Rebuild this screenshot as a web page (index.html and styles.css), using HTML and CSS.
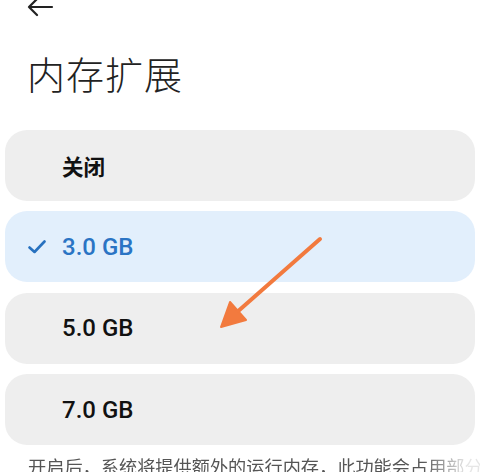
FILE: index.html
```html
<!DOCTYPE html>
<html>
<head lang="zh">
  <meta charset="UTF-8">
  <title>内存扩展</title>
  <link rel="stylesheet" href="styles.css">
</head>
<body>
<div class="page">
  <div class="top-bar">
    <svg class="back-icon" width="28" height="20" viewBox="0 0 28 20">
      <path d="M26 10 H3 M11 2 L3 10 L11 18" fill="none" stroke="#222" stroke-width="2.2" stroke-linecap="round" stroke-linejoin="round"/>
    </svg>
  </div>
  <h1 class="page-title">内存扩展</h1>

  <div class="option-list">
    <div class="option-item">
      <span class="check-slot"></span>
      <span class="option-text cn">关闭</span>
    </div>
    <div class="option-item selected">
      <span class="check-slot">
        <svg width="18" height="14" viewBox="0 0 18 14">
          <path d="M1.5 7.5 L6.5 12 L16.5 1.5" fill="none" stroke="#2771bf" stroke-width="2.6" stroke-linecap="round" stroke-linejoin="round"/>
        </svg>
      </span>
      <span class="option-text">3.0 GB</span>
    </div>
    <div class="option-item">
      <span class="check-slot"></span>
      <span class="option-text">5.0 GB</span>
    </div>
    <div class="option-item">
      <span class="check-slot"></span>
      <span class="option-text">7.0 GB</span>
    </div>
  </div>

  <p class="tip-text">开启后，系统将提供额外的运行内存，此功能会占用部分</p>

  <!-- 标注箭头 -->
  <svg class="mark-arrow" width="480" height="472" viewBox="0 0 480 472">
    <path d="M320 239 L236 313" fill="none" stroke="#f27a3e" stroke-width="4" stroke-linecap="round"/>
    <path d="M221 327 L230 302 L246 320 Z" fill="#f27a3e" stroke="#f27a3e" stroke-width="2" stroke-linejoin="round"/>
  </svg>
</div>
</body>
</html>
```

FILE: styles.css
```css
html, body, div, p, h1, span {
  margin: 0px;
  padding: 0px;
}

body {
  background: #ffffff;
  font-family: Roboto, "Noto Sans CJK SC", sans-serif;
  color: #1a1a1a;
  overflow: hidden;
}

.page {
  width: 480px;
  height: 472px;
  position: relative;
  overflow: hidden;
}

.top-bar {
  height: 20px;
  padding-left: 26px;
}

.back-icon {
  display: block;
  margin-top: -3px;
}

.page-title {
  margin-top: 30px;
  padding-left: 27px;
  height: 52px;
  line-height: 52px;
  font-family: "Noto Sans CJK SC", sans-serif;
  font-size: 38px;
  font-weight: 300;
  color: #222222;
  letter-spacing: 1px;
}

.option-list {
  margin-top: 31px;
  padding: 0px 5px;
  display: flex;
  flex-direction: column;
  gap: 10.4px;
}

.option-item {
  height: 71px;
  border-radius: 22px;
  background: #eeeeee;
  display: flex;
  align-items: center;
  padding-left: 23px;
}

.option-item.selected {
  background: #e2effc;
}

.check-slot {
  width: 34px;
  display: flex;
  align-items: center;
}

.check-slot svg {
  display: block;
}

.option-text {
  font-size: 24px;
  font-weight: 500;
  color: #111111;
  font-family: Roboto, "Noto Sans CJK SC", sans-serif;
}

.option-text.cn {
  font-size: 21.5px;
  font-weight: 700;
  font-family: "Noto Sans CJK SC", sans-serif;
}

.selected .option-text {
  color: #2a74c4;
}

.tip-text {
  margin-top: 6px;
  padding-left: 28px;
  font-family: "Noto Sans CJK SC", sans-serif;
  font-size: 18.2px;
  color: #555555;
  white-space: nowrap;
  line-height: 30px;
  -webkit-mask-image: linear-gradient(to right, #000 88%, rgba(0, 0, 0, 0.15) 97%);
  mask-image: linear-gradient(to right, #000 88%, rgba(0, 0, 0, 0.15) 97%);
}

.mark-arrow {
  position: absolute;
  left: 0px;
  top: 0px;
  pointer-events: none;
}
```
